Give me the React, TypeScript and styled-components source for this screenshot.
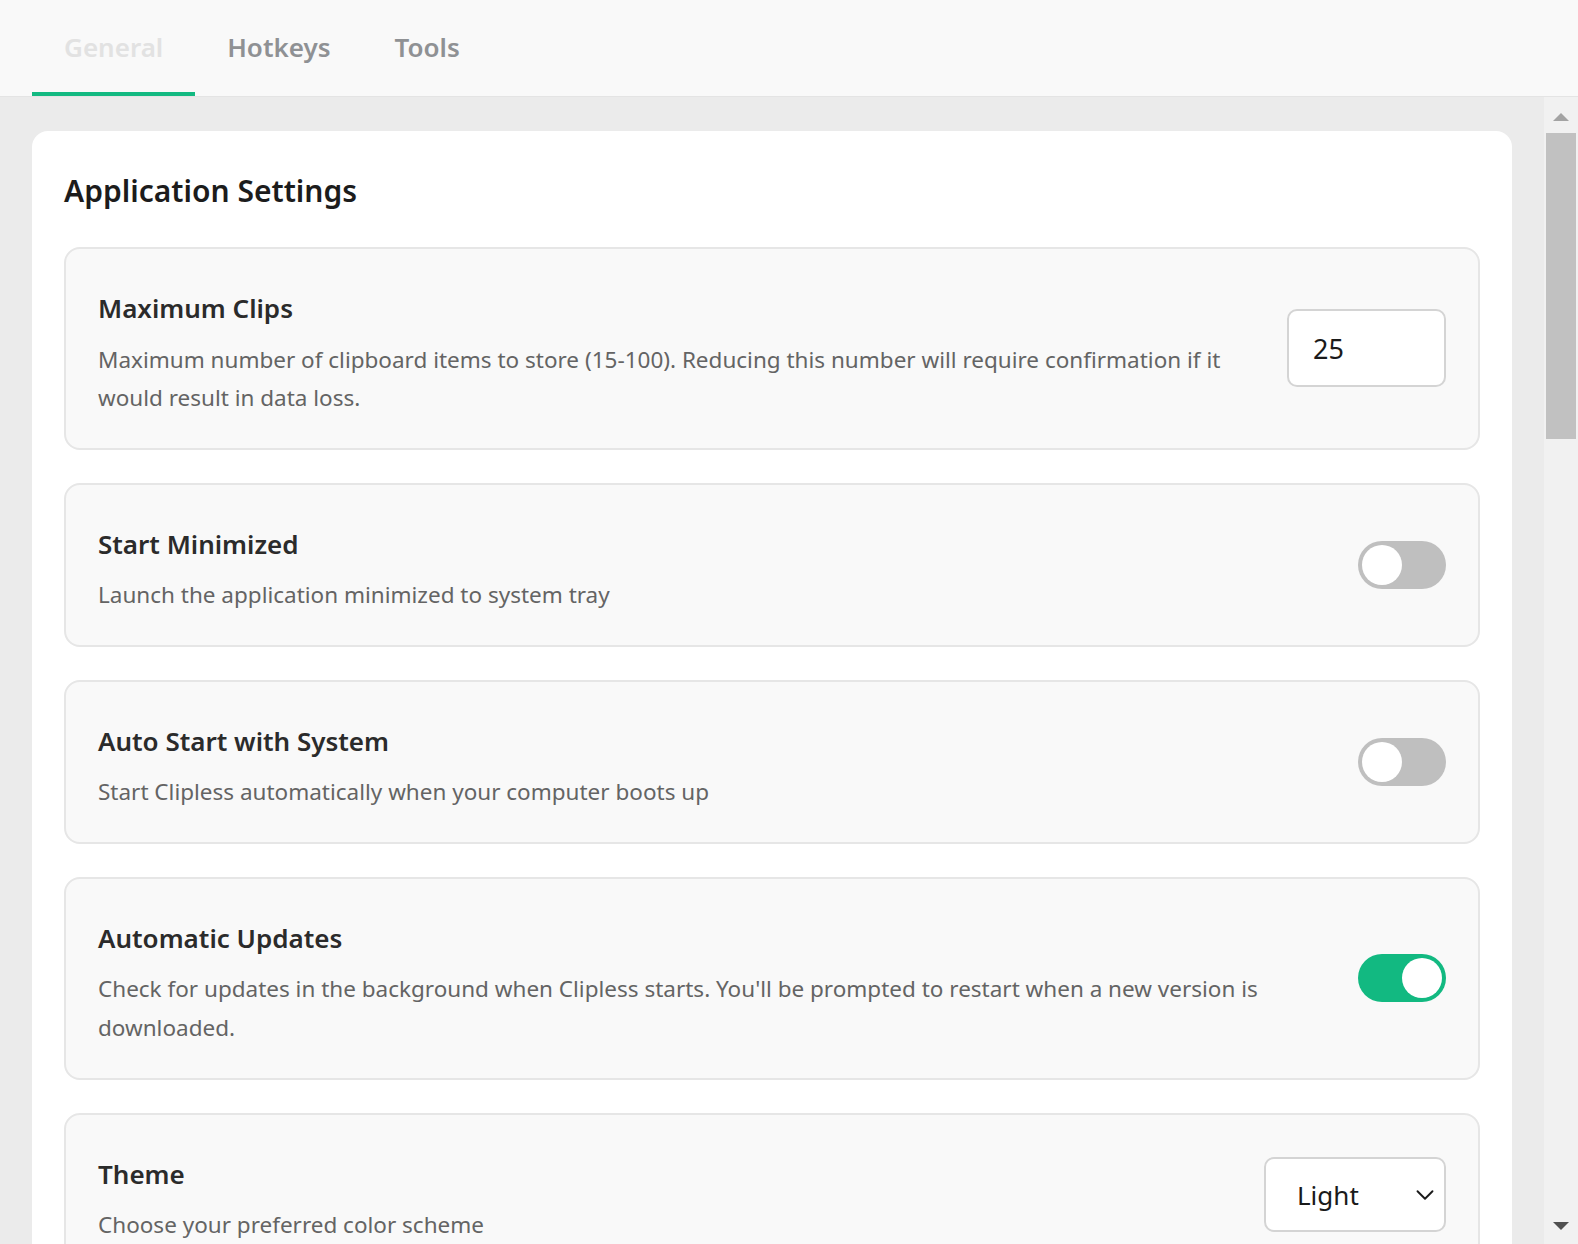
import React, { useState } from "react";
import styled, { createGlobalStyle } from "styled-components";
import { ChevronDown } from "lucide-react";

const GlobalStyle = createGlobalStyle`
  html, body {
    margin: 0;
    padding: 0;
    height: 100%;
  }
  body {
    font-family: "Segoe UI", "Noto Sans", sans-serif;
    color: #1f1f1f;
    background: #ebebeb;
    overflow: hidden;
  }
  * {
    box-sizing: border-box;
  }
`;

const Page = styled.div`
  display: flex;
  flex-direction: column;
  height: 100vh;
`;

const Header = styled.header`
  flex: 0 0 auto;
  display: flex;
  padding-left: 32px;
  height: 97px;
  background: #f9f9f9;
  border-bottom: 1px solid #e4e4e4;
`;

const Tab = styled.button<{ $active?: boolean }>`
  display: flex;
  align-items: center;
  padding: 2px 32px 0;
  border: none;
  border-bottom: 4px solid ${(p) => (p.$active ? "#12b981" : "transparent")};
  background: none;
  font-family: inherit;
  font-size: 26px;
  font-weight: 600;
  color: ${(p) => (p.$active ? "#e2e2e2" : "#8f9194")};
  cursor: pointer;
`;

const Body = styled.div`
  flex: 1 1 auto;
  min-height: 0;
  display: flex;
`;

const Main = styled.main`
  flex: 1 1 auto;
  min-width: 0;
  overflow-y: auto;
  scrollbar-width: none;
  padding: 34px 32px 32px;
  background: #ebebeb;
`;

const ScrollRail = styled.div`
  flex: 0 0 34px;
  display: flex;
  flex-direction: column;
  background: #f1f1f1;
`;

const RailButton = styled.div<{ $down?: boolean }>`
  flex: 0 0 34px;
  display: flex;
  justify-content: center;
  align-items: center;
  padding: ${(p) => (p.$down ? "0 0 2px" : "6px 0 0")};
`;

const Arrow = styled.span<{ $down?: boolean }>`
  width: 0;
  height: 0;
  border-left: 8px solid transparent;
  border-right: 8px solid transparent;
  ${(p) =>
    p.$down
      ? "border-top: 8px solid #505050;"
      : "border-bottom: 8px solid #a3a3a3;"}
`;

const Track = styled.div`
  flex: 1 1 auto;
  padding: 2px 2px 0;
`;

const Thumb = styled.div`
  height: 306px;
  background: #c1c1c1;
`;

const Card = styled.section`
  background: #ffffff;
  border-radius: 16px;
  padding: 32px;
  & + & {
    margin-top: 32px;
  }
`;

const CardTitle = styled.h2`
  margin: 8px 0 36px;
  font-size: 30px;
  line-height: 40px;
  font-weight: 600;
  color: #1c1c1c;
`;

const List = styled.div`
  display: flex;
  flex-direction: column;
  gap: 33px;
`;

const Item = styled.div`
  display: flex;
  align-items: center;
  gap: 32px;
  padding: 35px 32px;
  background: #f9f9f9;
  border: 2px solid #e6e6e6;
  border-radius: 16px;
`;

const Text = styled.div`
  flex: 1 1 auto;
  min-width: 0;
  margin: 5px 0 -5px;
`;

const ItemTitle = styled.h3`
  margin: 0 0 12.5px;
  font-size: 26px;
  line-height: 39px;
  font-weight: 600;
  color: #2b2b2b;
`;

const Desc = styled.p`
  margin: 0;
  font-size: 22.5px;
  line-height: 38.6px;
  color: #646464;
`;

const NumberInput = styled.input`
  flex: 0 0 auto;
  width: 159px;
  height: 78px;
  padding: 0 24px;
  border: 2px solid #d4d4d4;
  border-radius: 10px;
  background: #ffffff;
  font-family: inherit;
  font-size: 27px;
  color: #1a1a1a;
  outline: none;
`;

const Switch = styled.button<{ $on?: boolean }>`
  flex: 0 0 auto;
  display: flex;
  align-items: center;
  justify-content: ${(p) => (p.$on ? "flex-end" : "flex-start")};
  width: 88px;
  height: 48px;
  padding: 0 4px;
  border: none;
  border-radius: 24px;
  background: ${(p) => (p.$on ? "#12b981" : "#bfbfbf")};
  cursor: pointer;
`;

const Knob = styled.span`
  width: 40px;
  height: 40px;
  border-radius: 50%;
  background: #ffffff;
`;

const SelectWrap = styled.div`
  position: relative;
  flex: 0 0 auto;
  width: 182px;
  height: 75px;
`;

const Select = styled.select`
  width: 100%;
  height: 100%;
  padding: 0 48px 0 31px;
  appearance: none;
  border: 2px solid #d4d4d4;
  border-radius: 10px;
  background: #ffffff;
  font-family: inherit;
  font-size: 26px;
  color: #1a1a1a;
  outline: none;
`;

const Chevron = styled(ChevronDown)`
  position: absolute;
  right: 6px;
  top: 50%;
  transform: translateY(-50%);
  pointer-events: none;
  color: #1a1a1a;
`;

type Setting = {
  title: string;
  desc: string;
  control: "number" | "toggle" | "select";
  on?: boolean;
  value?: string;
  options?: string[];
};

const general: Setting[] = [
  {
    title: "Maximum Clips",
    desc: "Maximum number of clipboard items to store (15-100). Reducing this number will require confirmation if it would result in data loss.",
    control: "number",
    value: "25",
  },
  {
    title: "Start Minimized",
    desc: "Launch the application minimized to system tray",
    control: "toggle",
  },
  {
    title: "Auto Start with System",
    desc: "Start Clipless automatically when your computer boots up",
    control: "toggle",
  },
  {
    title: "Automatic Updates",
    desc: "Check for updates in the background when Clipless starts. You'll be prompted to restart when a new version is downloaded.",
    control: "toggle",
    on: true,
  },
  {
    title: "Theme",
    desc: "Choose your preferred color scheme",
    control: "select",
    value: "Light",
    options: ["Light", "Dark", "System"],
  },
  {
    title: "Show Notifications",
    desc: "Display a notification when a new item is copied",
    control: "toggle",
  },
  {
    title: "Transparency",
    desc: "Make the clips window slightly see-through",
    control: "toggle",
  },
  {
    title: "Window Position",
    desc: "Where the clips window appears when opened",
    control: "select",
    value: "Cursor",
    options: ["Cursor", "Center", "Tray"],
  },
];

const storage: Setting[] = [
  {
    title: "Save Images",
    desc: "Store copied images alongside text in your history",
    control: "toggle",
    on: true,
  },
  {
    title: "Remember Files",
    desc: "Keep copied file paths in the clipboard history",
    control: "toggle",
  },
  {
    title: "Clear on Exit",
    desc: "Remove all unlocked clips when the application closes",
    control: "toggle",
  },
  {
    title: "Encrypt History",
    desc: "Protect stored clips with local encryption",
    control: "toggle",
  },
  {
    title: "History Retention",
    desc: "How long clips are kept before they are removed",
    control: "select",
    value: "Forever",
    options: ["Forever", "30 days", "7 days"],
  },
];

const privacy: Setting[] = [
  {
    title: "Ignore Password Managers",
    desc: "Skip clips that come from password manager applications",
    control: "toggle",
    on: true,
  },
  {
    title: "Pause Capturing",
    desc: "Temporarily stop saving new clipboard items",
    control: "toggle",
  },
  {
    title: "Send Crash Reports",
    desc: "Help improve Clipless by sending anonymous error reports",
    control: "toggle",
  },
  {
    title: "Language",
    desc: "Language used across the interface",
    control: "select",
    value: "English",
    options: ["English", "Deutsch", "Español"],
  },
];

const SettingRow: React.FC<{ s: Setting }> = ({ s }) => {
  const [on, setOn] = useState(!!s.on);
  return (
    <Item>
      <Text>
        <ItemTitle>{s.title}</ItemTitle>
        <Desc>{s.desc}</Desc>
      </Text>
      {s.control === "number" && (
        <NumberInput type="text" defaultValue={s.value} />
      )}
      {s.control === "toggle" && (
        <Switch $on={on} onClick={() => setOn(!on)}>
          <Knob />
        </Switch>
      )}
      {s.control === "select" && (
        <SelectWrap>
          <Select defaultValue={s.value}>
            {s.options!.map((o) => (
              <option key={o}>{o}</option>
            ))}
          </Select>
          <Chevron size={30} strokeWidth={1.5} />
        </SelectWrap>
      )}
    </Item>
  );
};

const SettingsCard: React.FC<{ title: string; items: Setting[] }> = ({
  title,
  items,
}) => (
  <Card>
    <CardTitle>{title}</CardTitle>
    <List>
      {items.map((s) => (
        <SettingRow key={s.title} s={s} />
      ))}
    </List>
  </Card>
);

const App: React.FC = () => {
  const [tab, setTab] = useState("General");
  return (
    <Page>
      <GlobalStyle />
      <Header>
        {["General", "Hotkeys", "Tools"].map((t) => (
          <Tab key={t} $active={tab === t} onClick={() => setTab(t)}>
            {t}
          </Tab>
        ))}
      </Header>
      <Body>
        <Main>
          <SettingsCard title="Application Settings" items={general} />
          <SettingsCard title="Storage" items={storage} />
          <SettingsCard title="Privacy" items={privacy} />
        </Main>
        <ScrollRail>
          <RailButton>
            <Arrow />
          </RailButton>
          <Track>
            <Thumb />
          </Track>
          <RailButton $down>
            <Arrow $down />
          </RailButton>
        </ScrollRail>
      </Body>
    </Page>
  );
};

export default App;
